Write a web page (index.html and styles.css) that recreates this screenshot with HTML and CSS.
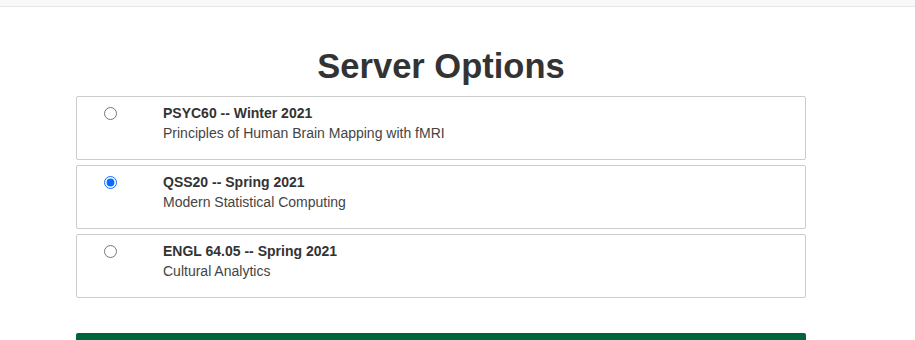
FILE: index.html
```html
<!DOCTYPE html>
<html lang="en">
<head>
<meta charset="utf-8">
<title>Server Options</title>
<link rel="stylesheet" href="styles.css">
</head>
<body>
<div class="topbar"></div>
<main class="container">
  <h1 class="title">Server Options</h1>
  <form class="options">
    <label class="option">
      <input type="radio" name="server" class="radio">
      <span class="info">
        <span class="course">PSYC60 -- Winter 2021</span>
        <span class="desc">Principles of Human Brain Mapping with fMRI</span>
      </span>
    </label>
    <label class="option">
      <input type="radio" name="server" class="radio" checked>
      <span class="info">
        <span class="course">QSS20 -- Spring 2021</span>
        <span class="desc">Modern Statistical Computing</span>
      </span>
    </label>
    <label class="option">
      <input type="radio" name="server" class="radio">
      <span class="info">
        <span class="course">ENGL 64.05 -- Spring 2021</span>
        <span class="desc">Cultural Analytics</span>
      </span>
    </label>
    <div class="submit-bar"></div>
  </form>
</main>
</body>
</html>
```

FILE: styles.css
```css
* { box-sizing: border-box; }
html, body { margin: 0; padding: 0; background: #fff; }
body {
  font-family: "Liberation Sans", Arial, Helvetica, sans-serif;
  color: #333;
  font-size: 14px;
  line-height: 20px;
}
.topbar {
  height: 7px;
  background: #f8f8f8;
  border-bottom: 1px solid #e7e7e7;
}
.container {
  width: 730px;
  margin-left: 76px;
}
.title {
  margin: 40px 0 11px;
  font-size: 34.5px;
  line-height: 38px;
  font-weight: bold;
  text-align: center;
  color: #333;
}
.options {
  display: flex;
  flex-direction: column;
  gap: 5px;
  margin: 0;
}
.option {
  display: flex;
  align-items: flex-start;
  height: 64px;
  border: 1px solid #ccc;
  border-radius: 2px;
  padding: 6px 0 0 27px;
  cursor: pointer;
}
.radio {
  width: 13px;
  height: 13px;
  margin: 4px 0 0 0;
  flex: none;
  accent-color: #0a6cff;
}
.info {
  display: flex;
  flex-direction: column;
  margin-left: 46px;
}
.course {
  font-weight: bold;
  font-size: 14px;
  line-height: 20px;
  color: #333;
}
.desc {
  font-size: 14px;
  line-height: 20px;
  color: #444;
}
.submit-bar {
  margin-top: 30px;
  height: 40px;
  background: #00643c;
  border-radius: 2px 2px 0 0;
}
```
